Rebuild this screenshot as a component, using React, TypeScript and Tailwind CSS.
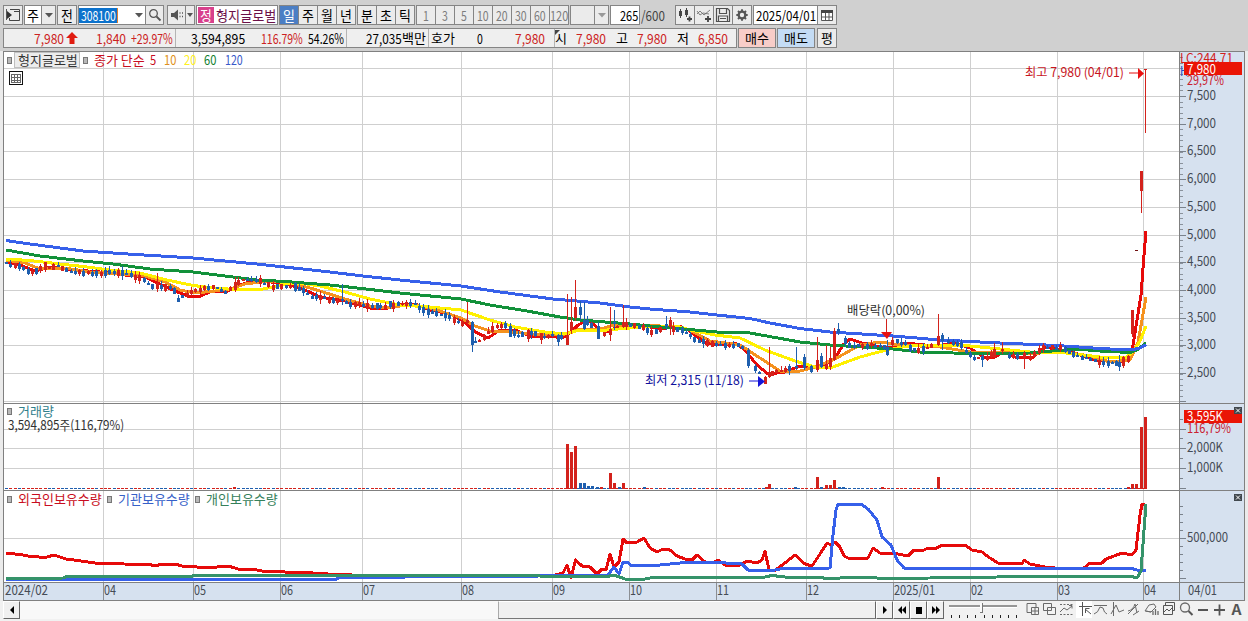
import React, { useLayoutEffect, useRef, useState } from "react";

type Pt = [number, number];

/* Text squeezed or stretched to an exact advance width. */
function Fit({ w, className = "", children }: { w: number; className?: string; children: string }) {
  const ref = useRef<HTMLSpanElement>(null);
  const [scale, setScale] = useState(1);
  useLayoutEffect(() => {
    if (ref.current && ref.current.offsetWidth) setScale(w / ref.current.offsetWidth);
  }, [w, children]);
  return (
    <span className={"inline-block shrink-0 whitespace-nowrap " + className} style={{ width: w }}>
      <span ref={ref} className="inline-block origin-left whitespace-nowrap" style={{ transform: `scaleX(${scale})` }}>
        {children}
      </span>
    </span>
  );
}

function Label({ x, y, w, fill = "#454b55", size = 13.5, children }: { x: number; y: number; w: number; fill?: string; size?: number; children: string }) {
  return (
    <text x={x} y={y} fill={fill} fontSize={size} textLength={w} lengthAdjust="spacingAndGlyphs">
      {children}
    </text>
  );
}

const parse = (s: string): Pt[] => s.trim().split(/\s+/).map((p) => p.split(",").map(Number) as Pt);

const BLUE = "6,240.5 30,244 83,251 120,253.5 193,258 257,264 330,272 363,276 400,280 461,286 500,292 553,299 600,303 630,307 650,309 690,312 717,315 750,318.5 770,323 800,328.5 830,332 893,336 940,340 1000,343 1057,345.5 1100,348.5 1131,350 1140,348 1146,344.5";
const GREEN = "6,250 40,256 83,261 113,264 150,269 193,272 257,280 285,281.5 330,285 353,287.5 400,293 461,299 490,305 527,311 560,317 580,320 630,324 650,326 717,332 750,333 800,342 830,345 893,349 920,352 970,353.5 1030,353 1075,349 1100,351 1130,352.5 1137,350 1146,343";
const YELLOW = "6,259 30,260.5 60,264 83,266.5 110,270 140,273 167,280 193,285.5 215,288 240,290 263,289 285,284 300,283 320,286 345,292 370,299 400,305 430,307 461,310 490,320 515,327 545,332 565,334 580,330 595,331 630,328 650,326 680,327 690,330 715,335 740,338 765,350 795,361 815,367 833,367 860,357 890,349 910,346 940,345 970,346 1000,349 1030,352 1057,352 1075,354 1100,357 1125,358 1133,352 1140,341 1146,326";
const ORANGE = "6,260 25,263 40,269 65,268 90,272 120,274 145,276 165,282 180,290 195,293 215,291 230,289 245,284 270,281 290,283 310,288 320,291 345,299 370,306 390,308 405,305 420,306 440,311 461,318 475,326 490,331 510,332 545,335 565,334 580,329 600,329 615,325 640,325 680,327 690,330 710,341 740,345 760,358 780,371 800,371 815,367 835,359 860,345 880,342 900,345 940,347 970,352 1000,352 1030,354 1057,351 1090,356 1110,362 1130,360 1138,342 1142,320 1146,297";
const RED = "6,262 20,265 35,271 50,267 75,270 100,272 125,275 145,277 160,284 175,291 188,296 198,297 210,292 228,291 240,285 250,282 265,281 290,285 305,290 320,297 345,301 370,308 385,309 400,304 415,304 430,310 450,314 465,322 475,332 488,338 500,330 515,330 530,336 550,336 562,338 570,333 578,325 588,320 598,328 608,332 620,325 640,325 660,329 680,326 690,331 705,343 720,345 735,343 745,350 757,365 768,374 785,372 800,366 820,368 835,358 843,345 850,339 862,343 880,347 893,348 905,343 925,345 935,346 955,343 970,348 985,358 995,357 1005,351 1015,357 1032,358 1045,347 1060,350 1075,353 1095,360 1118,362 1130,359 1133,345 1137,320 1141,295 1144,255 1146,231";

const CLOSE = parse(
  "6,263 12,265 20,266 30,272 38,271 45,267 57,267 70,271 95,273 120,274 140,277 148,283 153,287 160,285 172,289 178,297 184,297 195,291 205,287 215,287 226,292 236,284 243,280 260,282 275,287 292,286 300,290 312,298 330,300 345,302 365,307 382,308 398,304 415,303 424,312 440,315 455,320 468,325 476,343 485,336 495,328 508,325 515,336 530,332 545,336 558,337 567,340 571,328 576,312 586,320 597,331 606,335 620,325 636,326 655,332 670,326 682,332 700,343 716,344 740,345 748,358 756,371 765,379 775,371 790,368 803,366 812,370 824,365 834,345 840,335 850,345 868,346 886,348 897,341 905,343 913,350 930,346 942,341 960,345 974,358 986,357 997,350 1008,357 1030,357 1042,347 1060,348 1078,357 1095,361 1118,363 1127,358"
);

const at = (pts: Pt[], x: number) => {
  for (let i = 1; i < pts.length; i++) {
    const [x1, y1] = pts[i];
    const [x0, y0] = pts[i - 1];
    if (x <= x1) return y0 + ((y1 - y0) * Math.max(0, x - x0)) / (x1 - x0);
  }
  return pts[pts.length - 1][1];
};

type Candle = { x: number; top: number; bot: number; hi: number; lo: number; up: boolean };

/* x, body top, body bottom, high, low, rising */
const KEY: [number, number, number, number, number, number][] = [
  [45, 262, 270, 262, 272, 1], [109, 270, 274, 266, 275, 0], [157, 283, 289, 273, 292, 1], [165, 284, 291, 284, 292, 1],
  [178, 298, 302, 295, 302, 0], [235, 282, 290, 277, 292, 1], [295, 283, 291, 282, 292, 0], [342, 299, 301, 284, 305, 0],
  [377, 303, 309, 303, 310, 0], [390, 301, 307, 301, 309, 0], [467, 320, 323, 302, 324, 1], [472, 322, 345, 321, 352, 0],
  [510, 326, 337, 323, 337, 0], [528, 330, 339, 329, 342, 1], [541, 333, 340, 333, 344, 1], [558, 335, 342, 334, 346, 0], [567, 335, 345, 294, 345, 1],
  [571, 322, 330, 297, 334, 1], [575.4, 307, 318, 280, 321, 1], [580, 307, 315, 301, 320, 0], [584, 320, 329, 302, 330, 0],
  [598, 326, 339, 322, 339, 0], [610, 329, 335, 307, 341, 1], [614, 322, 324, 310, 330, 0], [623, 322, 327, 305, 328, 1],
  [666, 324, 327, 316, 330, 0], [670, 320, 327, 317, 335, 1], [748, 350, 366, 348, 368, 0], [765, 377, 384, 376, 384, 1],
  [769, 372, 377, 347, 378, 1], [796, 366, 368, 347, 370, 0], [804, 357, 368, 354, 370, 0], [817, 360, 370, 337, 372, 1],
  [821, 356, 367, 353, 368, 0], [826.4, 365, 369, 345, 370, 1], [830, 358, 367, 347, 370, 1], [834.4, 331, 360, 328, 361, 1],
  [838.4, 329, 333, 323, 335, 0], [887, 347, 355, 340, 356, 0], [938, 336, 345, 314, 346, 1], [942, 335, 341, 333, 350, 0],
  [982, 356, 360, 354, 367, 0], [994, 349, 357, 343, 358, 1], [1002, 349, 351, 342, 354, 1], [1024, 353, 358, 351, 369, 1],
  [1119, 362, 367, 355, 371, 0], [1123, 357, 366, 356, 368, 1], [1128, 356, 362, 355, 363, 1], [1132.4, 310, 333, 310, 337, 1],
];

const candles: Candle[] = [];
for (let i = 0; i < 263; i++) {
  const x = 6 + i * 4.303;
  if (x > 1130 || KEY.some((k) => Math.abs(k[0] - x) < 2.6)) continue;
  const r = (Math.sin(i * 12.9898) * 43758.5453) % 1;
  const s = (Math.sin(i * 78.233) * 12543.123) % 1;
  const c = at(CLOSE, x) + r * 1.4;
  const h = 0.8 + Math.abs(s) * 2.2;
  const slope = at(CLOSE, x + 5) - at(CLOSE, x - 5);
  candles.push({ x, top: c - h, bot: c + h, hi: c - h - Math.abs(r) * 4, lo: c + h + Math.abs(s * r) * 4, up: slope * 0.25 + s * 1.2 < 0 });
}
KEY.forEach(([x, top, bot, hi, lo, u]) => candles.push({ x, top, bot, hi, lo, up: u === 1 }));

const VOL: [number, number, number][] = [
  [234, 487, 1], [567.5, 444, 1], [571.5, 452, 1], [575.5, 446, 1], [580, 483, 0], [584, 483, 0], [588, 486, 0], [592.5, 486, 0], [597, 487, 0],
  [601, 487, 1], [610.5, 473, 1], [614.5, 483, 1], [619, 487, 0], [623.5, 483, 1], [644, 487, 0], [766, 487, 1], [769.5, 484, 1], [795, 487, 0],
  [817.5, 477, 1], [821.5, 487, 0], [826, 485, 1], [830.5, 485, 1], [834.5, 480, 1], [839, 487, 0], [843.5, 487, 0], [882, 487, 1], [938.5, 477, 1],
  [1128, 487, 1], [1132.5, 484, 1], [1136.5, 484, 1], [1141.5, 427, 1], [1145.5, 417, 1],
];

const FOREIGN = "6,553 20,554.5 28,556 45,557.5 54,555 66,559 85,561.5 98,563.5 150,564.5 155,566 162,564 168,565 175,564 182,566 205,567.5 230,566.5 238,569 255,569.5 264,571.5 305,572.5 335,574.5 346,574 352,575 540,576 555,575 563,573 567,565 571,578 575.5,560 582,566 590,567 597,574 602,569 606,570 610,554 614,567 619,562 623,539 627,543 637,542 644,538 650,548 657,552 663,549 670,550 677,556 685,559 692,560 697,555 705,562 713,563 718,560 725,565 740,565 747,561 757,563 762,560 765,551 769,570 774,571 785,563 795,555 805,564 812,566 820,554 827,543 831,545 835,542 840,547 844,556 850,559 868,558 873,548 880,553 893,553 908,556 914,550 922,551 928,548 935,549 942,545 965,545 972,550 982,552 990,558 998,563 1022,564 1024,560 1030,564 1045,567 1065,569 1084,568 1090,563 1102,563 1106,559 1122,553 1132,555 1136,550 1140,515 1142,504 1145,504";
const INST = "6,579.5 335,579.5 340,577.5 540,576 590,575 608,575 614,567 619,574 623,562 627,562 632,566 660,565 680,563 710,562 742,564 748,570 775,570 780,569 830,568 833,535 836,510 838,504 861,504 868,509 877,520 882,537 891,545 897,560 904,568 1130,568 1137,570 1146,570.5";
const RETAIL = "6,578.5 64,578 66,576.5 190,576.5 195,575.5 540,576 605,577 614,575 625,579 645,579 655,577 665,578 690,577 765,577 772,575.5 785,577 820,577 825,578.5 840,578 870,577 880,578.5 980,577.5 1030,576 1130,576 1137,578 1141,571 1144,530 1146,504";

const MONTHS: [number, string, number][] = [
  [103, "04", 12], [193, "05", 12], [280, "06", 12], [362, "07", 12], [461, "08", 12], [552, "09", 12], [629, "10", 12],
  [716, "11", 12], [806, "12", 12], [893, "2025/01", 41], [970, "02", 12], [1057, "03", 12], [1143, "04", 12],
];
const PRICES = ["7,500", "7,000", "6,500", "6,000", "5,500", "5,000", "4,500", "4,000", "3,500", "3,000", "2,500"];
const PRICE_Y = [96, 124, 151, 179, 207, 235, 262, 290, 318, 345, 373];

function Verticals({ y0, y1 }: { y0: number; y1: number }) {
  return <>{MONTHS.map(([x]) => <rect key={x} x={x} y={y0} width="1" height={y1 - y0} fill="#cfcfcf" />)}</>;
}
function Frame({ top, height }: { top: number; height: number }) {
  return (
    <>
      <rect x="3" y={top} width="1176" height={height} fill="#fff" />
      <rect x="1179" y={top} width="66" height={height} fill="#d6e1ef" />
    </>
  );
}
function Edges({ top, height }: { top: number; height: number }) {
  return (
    <>
      <rect x="3" y={top} width="1" height={height} fill="#808080" />
      <rect x="1179" y={top} width="1" height={height} fill="#808080" />
      <rect x="1244" y={top} width="1" height={height} fill="#808080" />
      <rect x="3" y={top} width="1242" height="1" fill="#808080" />
    </>
  );
}
function Line({ points, color, w = 3 }: { points: string; color: string; w?: number }) {
  return <polyline points={points} fill="none" stroke={color} strokeWidth={w} strokeLinejoin="round" shapeRendering="crispEdges" />;
}
function CloseBox({ y }: { y: number }) {
  return (
    <g>
      <rect x="1234" y={y} width="8" height="7" fill="#41484e" />
      <path d={`M1236 ${y + 1.5}l4 4m0-4l-4 4`} stroke="#fff" />
    </g>
  );
}
const svgCls = "block w-[1242px] shrink-0 ml-[3px] overflow-visible";

function PricePanel() {
  const minor: number[] = [];
  for (let y = 57.2; y < 403; y += 5.55) minor.push(Math.round(y));
  return (
    <svg className={svgCls + " h-[352px]"} viewBox="3 51 1242 352">
      <Frame top={51} height={352} />
      <g shapeRendering="crispEdges">
        {[68, ...PRICE_Y, 401].map((y) => <rect key={y} x="4" y={y} width="1175" height="1" fill="#cfcfcf" />)}
        <Verticals y0={52} y1={403} />
        {minor.map((y) => <rect key={y} x="1180" y={y} width="3" height="1" fill="#8a929c" />)}
        {[...PRICE_Y, 401].map((y) => <rect key={y} x="1180" y={y} width="6" height="1" fill="#7a828c" />)}
      </g>
      <Line points={RED} color="#e60a0a" />
      <Line points={ORANGE} color="#f5921e" />
      <Line points={YELLOW} color="#fff000" />
      <Line points={GREEN} color="#12913a" />
      <Line points={BLUE} color="#3660ea" />
      <g shapeRendering="crispEdges">
        {candles.map((c) => {
          const x = Math.round(c.x);
          const f = c.up ? "#d3221c" : "#1f5fae";
          return (
            <g key={c.x} fill={f}>
              <rect x={x} y={Math.round(c.hi)} width="1" height={Math.max(1, Math.round(c.lo - c.hi))} />
              <rect x={x - 1} y={Math.round(c.top)} width="3" height={Math.max(2, Math.round(c.bot - c.top))} />
            </g>
          );
        })}
      </g>
      <g shapeRendering="crispEdges" fill="#d3221c">
        <rect x="1131" y="310" width="3" height="24" />
        <rect x="1135" y="250" width="3" height="1" fill="#701010" />
        <rect x="1140" y="171" width="3" height="20" />
        <rect x="1141" y="191" width="1" height="22" />
        <rect x="1145" y="69" width="1" height="64" />
        <rect x="1144" y="69" width="3" height="1" />
        <rect x="886" y="319" width="1" height="14" />
      </g>
      <path d="M881 332h11l-5 7z" fill="#e81010" />
      <path d="M1129 72.500h9v-4.500l6 5.500-6 5.500v-5.500h-9z" fill="#e81010" />
      <path d="M749 380.500h9v-4.500l7 5.500-7 5.500v-5.500h-9z" fill="#1414d8" />
      <Label x={1025} y={77} w={99} fill="#c8141c" size={12.5}>최고 7,980 (04/01)</Label>
      <Label x={645} y={385} w={99} fill="#10109c" size={12.5}>최저 2,315 (11/18)</Label>
      <Label x={847} y={315} w={78} fill="#303030" size={12.5}>배당락(0,00%)</Label>
      <Label x={1180} y={63} w={53} fill="#d3221c">LC:244,71</Label>
      <Label x={1180} y={76} w={8} fill="#2050c8">H</Label>
      <rect x="1184" y="62" width="58" height="13" fill="#ea1506" />
      <Label x={1187} y={73.5} w={29} fill="#ffffff">7,980</Label>
      <Label x={1187} y={85} w={37} fill="#c92030">29,97%</Label>
      {PRICES.map((p, i) => <Label key={p} x={1187} y={PRICE_Y[i] + 4} w={29}>{p}</Label>)}
      <Edges top={51} height={352} />
    </svg>
  );
}

function VolumePanel() {
  const ticks: number[] = [];
  for (let i = 0; i < 265; i++) ticks.push(i);
  return (
    <svg className={svgCls + " h-[87px]"} viewBox="3 403 1242 87">
      <Frame top={403} height={87} />
      <g shapeRendering="crispEdges">
        {[429, 448, 468].map((y) => <rect key={y} x="4" y={y} width="1175" height="1" fill="#cfcfcf" />)}
        <Verticals y0={404} y1={490} />
        {[419, 429, 438, 448, 458, 468, 478, 488].map((y, i) => <rect key={y} x="1180" y={y} width={i % 2 ? 6 : 3} height="1" fill="#7a828c" />)}
        {ticks.map((i) => (
          <rect key={i} x={Math.round(5 + i * 4.303)} y="488" width="3" height="1" fill={Math.sin(i * 1.7) + Math.sin(i * 0.31) > 0 ? "#d3221c" : "#1f5fae"} />
        ))}
        {VOL.map(([x, y, u]) => <rect key={x} x={Math.round(x - 1.5)} y={y} width="3" height={489 - y} fill={u ? "#d3221c" : "#1f5fae"} />)}
      </g>
      <rect x="1184" y="410" width="58" height="13" fill="#ea1506" />
      <Label x={1187} y={421} w={36} fill="#ffffff">3,595K</Label>
      <Label x={1187} y={433} w={44} fill="#c92030">116,79%</Label>
      <Label x={1187} y={452} w={36}>2,000K</Label>
      <Label x={1187} y={472} w={36}>1,000K</Label>
      <CloseBox y={407} />
      <Edges top={403} height={87} />
    </svg>
  );
}

function HoldingPanel() {
  return (
    <svg className={svgCls + " h-[92px]"} viewBox="3 490 1242 92">
      <Frame top={490} height={92} />
      <g shapeRendering="crispEdges">
        <rect x="4" y="538" width="1175" height="1" fill="#cfcfcf" />
        <Verticals y0={491} y1={582} />
        {[506, 514, 522, 530, 546, 554, 562, 570].map((y) => <rect key={y} x="1180" y={y} width="3" height="1" fill="#7a828c" />)}
        {[538, 578].map((y) => <rect key={y} x="1180" y={y} width="6" height="1" fill="#7a828c" />)}
      </g>
      <Line points={FOREIGN} color="#e60a0a" />
      <Line points={INST} color="#3660ea" />
      <Line points={RETAIL} color="#35936a" />
      <Label x={1187} y={542} w={41}>500,000</Label>
      <CloseBox y={494} />
      <Edges top={490} height={92} />
    </svg>
  );
}

function DateAxis() {
  return (
    <svg className={svgCls + " h-[19px]"} viewBox="3 582 1242 19">
      <rect x="3" y="582" width="1242" height="19" fill="#d6e1ef" />
      {MONTHS.map(([x, t, w]) => (
        <g key={x}>
          <rect x={x} y="582" width="1" height="19" fill="#8c8f94" />
          <Label x={x + 1} y={595} w={w}>{t}</Label>
        </g>
      ))}
      <Label x={5} y={595} w={43}>2024/02</Label>
      <Label x={1188} y={595} w={29}>04/01</Label>
      <rect x="3" y="600" width="1242" height="1" fill="#808080" />
      <Edges top={582} height={19} />
    </svg>
  );
}

const cell = "flex h-full shrink-0 items-center justify-center border border-[#858585]";
const Down = ({ c = "#555" }: { c?: string }) => (
  <svg className="block h-[5px] w-[8px] shrink-0" viewBox="0 0 8 5"><path d="M0 0h8l-4 4.500z" fill={c} /></svg>
);

function Toolbar() {
  return (
    <div className="flex h-5 shrink-0 pl-[3px] text-[14px]">
      <div className={cell + " w-5 bg-[#ebebeb]"}>
        <svg className="h-4 w-4" viewBox="0 0 16 16"><path d="M5 2.500h9.500v11H4.500V11M9 4.500h5" fill="none" stroke="#444" /><path d="M2 4l5 4-5 4z" fill="#333" /><path d="M1.500 2v11" stroke="#555" /></svg>
      </div>
      <div className={cell + " ml-px w-[18px] bg-white"}><Fit w={12}>주</Fit></div>
      <div className={cell + " -ml-px w-[15px] bg-[#ebebeb]"}><Down /></div>
      <div className={cell + " ml-px w-5 bg-[#ebebeb]"}><Fit w={12}>전</Fit></div>
      <div className={cell + " ml-px w-[54px] !justify-start border-r-0 bg-white"}>
        <span className="flex h-[15px] w-[38px] items-center bg-[#0c72cc] pl-0.5 text-white"><Fit w={35}>308100</Fit></span>
        <i className="h-[15px] w-px bg-[#e08030]" />
      </div>
      <div className={cell + " w-[14px] border-l-0 bg-white"}><Down /></div>
      <div className={cell + " w-[18px] border-l-0 bg-[#ebebeb]"}>
        <svg className="h-[14px] w-[14px]" viewBox="0 0 14 14"><circle cx="5.500" cy="5.500" r="3.800" fill="none" stroke="#555" strokeWidth="1.300" /><path d="M8.500 8.500l4 4" stroke="#555" strokeWidth="1.800" /></svg>
      </div>
      <div className={cell + " ml-[3px] w-[19px] bg-[#ebebeb]"}>
        <svg className="h-[14px] w-[14px]" viewBox="0 0 14 14"><path d="M1 5h3l4-3.500v11L4 9H1z" fill="#555" /><path d="M9.500 5h1m1.500 0h1M9.500 8.500h1m1.500 0h1" stroke="#555" strokeWidth="1.300" /></svg>
      </div>
      <div className={cell + " -ml-px w-[10px] bg-[#ebebeb]"}><svg className="h-1 w-1.5 shrink-0" viewBox="0 0 6 4"><path d="M0 0h6L3 4z" fill="#555" /></svg></div>
      <div className={cell + " ml-px w-[82px] !justify-start bg-white"}>
        <span className="ml-px flex h-4 w-4 items-center justify-center bg-[#d8408c] text-white"><Fit w={12}>정</Fit></span>
        <Fit w={60} className="ml-0.5 text-[#6b1048]">형지글로벌</Fit>
      </div>
      <div className={cell + " ml-px w-5 border-[#4b7ec4] bg-[#4b7ec4] text-white"}><Fit w={12}>일</Fit></div>
      {["주", "월", "년"].map((t) => <div key={t} className={cell + " -ml-px w-5 bg-[#ebebeb]"}><Fit w={12}>{t}</Fit></div>)}
      <div className="ml-[2px] flex">
        {["분", "초", "틱"].map((t) => <div key={t} className={cell + " -ml-px w-5 bg-[#ebebeb]"}><Fit w={12}>{t}</Fit></div>)}
      </div>
      <div className="ml-[2px] flex text-[#7c7c7c]">
        {["1", "3", "5", "10", "20", "30", "60", "120"].map((t) => <div key={t} className={cell + " -ml-px w-5 bg-[#ebebeb]"}><Fit w={t.length * 6}>{t}</Fit></div>)}
      </div>
      <div className={cell + " ml-px w-[25px] bg-[#ebebeb]"} />
      <div className={cell + " -ml-px w-[15px] bg-[#ebebeb]"}><Down c="#999" /></div>
      <div className={cell + " ml-px w-[30px] !justify-end bg-white pr-px"}><Fit w={18}>265</Fit></div>
      <div className="flex w-[35px] items-center pl-px text-[#444]"><Fit w={24}>/600</Fit></div>
      <div className={cell + " w-5 bg-[#ebebeb]"}>
        <svg className="h-4 w-4" viewBox="0 0 16 16"><path d="M3.500 2v9M9.500 1v9" stroke="#444" /><path d="M2 4h3v5H2zM8 3h3v5H8z" fill="#444" /><path d="M10 12h5M12.500 9.500v5" stroke="#444" strokeWidth="1.800" /></svg>
      </div>
      <div className={cell + " -ml-px w-5 bg-[#ebebeb]"}>
        <svg className="h-4 w-4" viewBox="0 0 16 16"><path d="M1 7l3-3 4 4 6-5M1 4l3 4 3-2 6 1" stroke="#666" fill="none" strokeWidth=".8" /><path d="M9 12h6M12 9v6" stroke="#444" strokeWidth="1.800" /></svg>
      </div>
      <div className={cell + " -ml-px w-5 bg-[#ebebeb]"}>
        <svg className="h-4 w-4" viewBox="0 0 16 16"><path d="M1.500 1.500h11l2 2v11h-13zM4.500 1.500v5h7v-5M3.500 14v-5h9v5M5 11.500h6" stroke="#505050" fill="none" strokeWidth="1.200" /></svg>
      </div>
      <div className={cell + " -ml-px w-5 bg-[#ebebeb]"}>
        <svg className="h-[14px] w-[14px]" viewBox="0 0 16 16"><circle cx="8" cy="8" r="3.800" fill="none" stroke="#555" strokeWidth="2.600" /><path d="M8 1.500v3M8 11.500v3M1.500 8h3M11.500 8h3M3.400 3.400l2 2M10.600 10.600l2 2M12.600 3.400l-2 2M5.400 10.600l-2 2" stroke="#555" strokeWidth="2.200" /></svg>
      </div>
      <div className={cell + " ml-px w-[65px] bg-white"}><Fit w={60}>2025/04/01</Fit></div>
      <div className={cell + " -ml-px w-5 bg-[#ebebeb]"}>
        <svg className="h-[11px] w-3" viewBox="0 0 12 11"><path d="M.500 1.500h11v9H.500zM.500 7h11M4.500 3v8M8 3v8" fill="#fff" stroke="#555" /><path d="M0 0h12v3H0z" fill="#444" /></svg>
      </div>
    </div>
  );
}

function QuoteBar() {
  const r = "text-[#cc2222]";
  return (
    <div className="mt-[3px] flex h-5 shrink-0 pl-[3px] text-[14px]">
      <div className="flex h-full w-[734px] shrink-0 items-center border border-[#858585] bg-[#efefef]">
        <div className="flex h-full w-[172px] shrink-0 items-center border-r border-[#b4b4b4]">
          <Fit w={30} className={"ml-[30px] " + r}>7,980</Fit>
          <svg className="ml-[2px] h-3 w-3" viewBox="0 0 12 12"><path d="M6 0l6 6H8.500v6h-5V6H0z" fill="#e01c10" /></svg>
          <Fit w={30} className={"ml-[18px] " + r}>1,840</Fit>
          <Fit w={42} className={"ml-[5px] " + r}>+29.97%</Fit>
        </div>
        <div className="flex h-full w-[171px] shrink-0 items-center border-r border-[#b4b4b4]">
          <Fit w={54} className="ml-[15px]">3,594,895</Fit>
          <Fit w={42} className={"ml-4 " + r}>116.79%</Fit>
          <Fit w={36} className="ml-[5px]">54.26%</Fit>
        </div>
        <div className="flex h-full w-[82px] shrink-0 items-center border-r border-[#b4b4b4]">
          <Fit w={36} className="ml-[19px]">27,035</Fit>
          <Fit w={24} className="text-[13px]">백만</Fit>
        </div>
        <div className="flex h-full w-[126px] shrink-0 items-center border-r border-[#b4b4b4]">
          <Fit w={24} className="ml-[2px] text-[13px]">호가</Fit>
          <Fit w={6} className="ml-[22px]">0</Fit>
          <Fit w={30} className={"ml-[32px] " + r}>7,980</Fit>
        </div>
        <div className="relative flex h-full items-center">
          <svg className="absolute left-0 top-px h-[5px] w-[5px]" viewBox="0 0 5 5"><path d="M0 0h5L0 5z" fill="#444" /></svg>
          <Fit w={12} className="text-[13px]">시</Fit>
          <Fit w={30} className={"ml-[9px] " + r}>7,980</Fit>
          <Fit w={12} className="ml-[10px] text-[13px]">고</Fit>
          <Fit w={30} className={"ml-[9px] " + r}>7,980</Fit>
          <Fit w={12} className="ml-[10px] text-[13px]">저</Fit>
          <Fit w={30} className={"ml-[9px] " + r}>6,850</Fit>
        </div>
      </div>
      <div className={cell + " ml-px w-[38px] bg-[#f8cdc8] text-[13px]"}><Fit w={24}>매수</Fit></div>
      <div className={cell + " ml-px w-[38px] bg-[#c4dcf5] text-[13px]"}><Fit w={24}>매도</Fit></div>
      <div className={cell + " ml-[2px] w-5 bg-[#ebebeb] text-[13px]"}><Fit w={12}>평</Fit></div>
    </div>
  );
}

const Dot = ({ className = "" }: { className?: string }) => <i className={"h-[7px] w-[5px] shrink-0 border border-[#777] bg-[#b8b8b8] " + className} />;
const navBtn = "flex h-[18px] w-[17px] shrink-0 items-center justify-center border border-t-white border-l-white border-r-[#666] border-b-[#666] bg-[#f0f0f0]";

function BottomIcons() {
  const s = { fill: "none", stroke: "#6a6a6a" };
  return (
    <svg className="ml-[5px] h-[18px] w-[222px] shrink-0 overflow-visible" viewBox="1023 601 222 18">
      <rect x="1076" y="601" width="16" height="17" fill="#fff" />
      <g {...s}>
        <path d="M1031 612.500h-4v-9h9v4M1031.500 607.500h7v7h-7zM1035 608v6M1032 611h6" />
        <path d="M1043.500 603.500h8v7h-8zM1047.500 607.500h8v7h-8z" fill="#f3f3f3" />
        <path d="M1060 604.500h13M1060 614.500h13" strokeDasharray="2 1.500" />
        <path d="M1060 612l4-4 3 2 5-4M1069 605.500h3v3" />
        <path d="M1079 606.500h13M1082.500 602v14M1091 614l-6-5M1085.500 613v-4.500h4" stroke="#555" />
        <path d="M1094 605.500h13M1094 614q4-1 6-7l3 1q1 5 4 6" />
        <path d="M1113.500 602v14M1111 614l5-9 3 7 5-2" />
        <path d="M1128 614l10-10M1128 611q5-1 7-7l2 9M1133 615l6-4" />
        <path d="M1145 611l4-6 5-1 2 3-5 5zM1146 611l5 1" />
        <path d="M1153 611v4M1155.500 609v6M1158 611v4" strokeWidth="1.300" />
        <path d="M1165.500 605v-2.500h9v8h-2M1163.500 605.500h9v9h-9zM1164 612l3-3 2 2 3-3" stroke="#555" />
      </g>
      <circle cx="1185" cy="607.500" r="4.500" {...s} strokeWidth="1.300" />
      <path d="M1188.500 611l4 4" stroke="#555" strokeWidth="2" />
      <path d="M1198 610h10M1214 610h11M1219.500 604.500v11" stroke="#555" strokeWidth="1.800" />
      <text x="1231.500" y="615" fontSize="14" className="font-bold" fill="#555" textLength="10" lengthAdjust="spacingAndGlyphs">A</text>
    </svg>
  );
}

function BottomBar() {
  const ticks = [0, 1, 2, 3, 4, 5, 6, 7, 8];
  return (
    <div className="flex h-[20px] shrink-0 items-start bg-[#f1f1f1] pl-[3px]">
      <div className={navBtn}><svg className="h-2 w-1" viewBox="0 0 4 8"><path d="M4 0v8L0 4z" /></svg></div>
      <div className="h-[18px] w-[478px] shrink-0 bg-[#f8f8f8]" />
      <div className="h-[18px] w-[378px] shrink-0 border border-t-white border-l-[#aaa] border-r-[#666] border-b-[#777] bg-[#f0f0f0]" />
      <div className={navBtn}><svg className="h-2 w-1" viewBox="0 0 4 8"><path d="M0 0v8l4-4z" /></svg></div>
      <div className={navBtn}><svg className="h-2 w-2" viewBox="0 0 8 8"><path d="M4 0v8L0 4zM8 0v8L4 4z" /></svg></div>
      <div className={navBtn}><i className="h-[7px] w-[6px] bg-black" /></div>
      <div className={navBtn}><svg className="h-2 w-2" viewBox="0 0 8 8"><path d="M0 0v8l4-4zM4 0v8l4-4z" /></svg></div>
      <svg className="ml-[5px] h-[18px] w-[69px] shrink-0" viewBox="949 601 69 18">
        <path d="M949 606h68" stroke="#777" strokeWidth="1.500" />
        <path d="M949 607.500h68" stroke="#fff" />
        <rect x="980" y="603" width="3" height="10" fill="#777" /><rect x="980" y="603" width="2" height="9" fill="#fafafa" />
        {ticks.map((i) => <rect key={i} x={Math.round(951 + i * 8.150)} y="615" width="1" height="3" fill="#222" />)}
      </svg>
      <BottomIcons />
    </div>
  );
}

export default function App() {
  return (
    <div className="relative flex h-[621px] w-[1248px] flex-col overflow-hidden bg-[#ebebeb] font-['Noto_Sans_CJK_KR',sans-serif] leading-[18px] text-black">
      <header className="flex h-[51px] shrink-0 flex-col bg-[#d0d0d0] pt-[5px]">
        <Toolbar />
        <QuoteBar />
      </header>
      <main className="relative flex shrink-0 flex-col">
        <PricePanel />
        <VolumePanel />
        <HoldingPanel />
        <DateAxis />
        <div className="absolute left-[7px] top-px flex h-4 items-center text-[13px]">
          <Dot />
          <span className="ml-[2px] flex h-4 items-center border border-[#c0c0c0] bg-[#ececec] pl-[3px] pr-px text-[#333]"><Fit w={60}>형지글로벌</Fit></span>
          <Dot className="ml-[3px]" />
          <Fit w={51} className="ml-[6px] text-[#c80c20]">종가 단순</Fit>
          <Fit w={6} className="ml-[5px] text-[#c80c20]">5</Fit>
          <Fit w={12} className="ml-[8px] text-[#e09020]">10</Fit>
          <Fit w={12} className="ml-[8px] text-[#fff020]">20</Fit>
          <Fit w={12} className="ml-[8px] text-[#128030]">60</Fit>
          <Fit w={18} className="ml-[9px] text-[#3858c8]">120</Fit>
        </div>
        <svg className="absolute left-[9px] top-[20px] h-[14px] w-[14px]" viewBox="0 0 14 14" shapeRendering="crispEdges">
          <path d="M.500.500h13v13H.500z" fill="#fff" stroke="#111" />
          <path d="M2.500 3.500h9v8h-9zM2.500 6.500h9M2.500 9.500h9M5.500 3v8M8.500 3v8" stroke="#666" fill="none" />
        </svg>
        <div className="absolute left-[7px] top-[351px] flex h-[18px] items-center text-[13px] text-[#30808c]">
          <Dot /><Fit w={36} className="ml-[6px]">거래량</Fit>
        </div>
        <div className="absolute left-[8px] top-[365px] flex h-[18px] items-center text-[13px] text-[#303030]"><Fit w={116}>3,594,895주(116,79%)</Fit></div>
        <div className="absolute left-[7px] top-[439px] flex h-[18px] items-center text-[13px]">
          <Dot /><Fit w={84} className="ml-[6px] text-[#c80c20]">외국인보유수량</Fit>
          <Dot className="ml-[5px]" /><Fit w={72} className="ml-[6px] text-[#3660c8]">기관보유수량</Fit>
          <Dot className="ml-[5px]" /><Fit w={72} className="ml-[6px] text-[#35805a]">개인보유수량</Fit>
        </div>
      </main>
      <BottomBar />
    </div>
  );
}
